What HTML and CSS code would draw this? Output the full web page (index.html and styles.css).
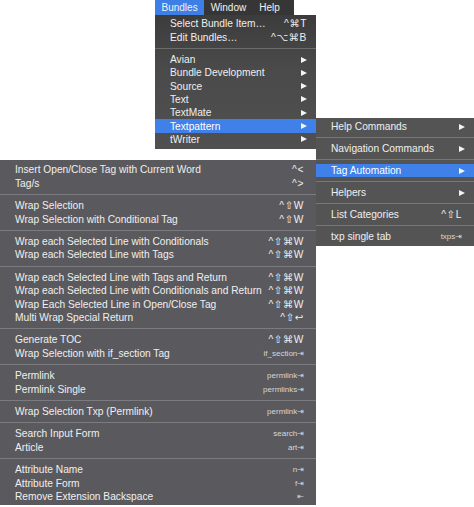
FILE: index.html
```html
<!DOCTYPE html>
<html>
<head>
<meta charset="utf-8">
<link rel="stylesheet" href="styles.css">
</head>
<body>
<div class="menubar">
  <span class="mb-item active">Bundles</span>
  <span class="mb-item">Window</span>
  <span class="mb-item">Help</span>
</div>

<div class="menu dropdown">
  <div class="row"><span>Select Bundle Item…</span><span class="key">^⌘T</span></div>
  <div class="row"><span>Edit Bundles…</span><span class="key">^⌥⌘B</span></div>
  <div class="sep"></div>
  <div class="row"><span>Avian</span><span class="arrow"></span></div>
  <div class="row"><span>Bundle Development</span><span class="arrow"></span></div>
  <div class="row"><span>Source</span><span class="arrow"></span></div>
  <div class="row"><span>Text</span><span class="arrow"></span></div>
  <div class="row"><span>TextMate</span><span class="arrow"></span></div>
  <div class="row hl"><span>Textpattern</span><span class="arrow"></span></div>
  <div class="row"><span>tWriter</span><span class="arrow"></span></div>
</div>

<div class="menu sub">
  <div class="row"><span>Help Commands</span><span class="arrow"></span></div>
  <div class="sep"></div>
  <div class="row"><span>Navigation Commands</span><span class="arrow"></span></div>
  <div class="sep"></div>
  <div class="row hl"><span>Tag Automation</span><span class="arrow"></span></div>
  <div class="sep"></div>
  <div class="row"><span>Helpers</span><span class="arrow"></span></div>
  <div class="sep"></div>
  <div class="row"><span>List Categories</span><span class="key">^⇧L</span></div>
  <div class="sep"></div>
  <div class="row"><span>txp single tab</span><span class="tab">txps⇥</span></div>
</div>

<div class="menu big">
  <div class="row"><span>Insert Open/Close Tag with Current Word</span><span class="key">^&lt;</span></div>
  <div class="row"><span>Tag/s</span><span class="key">^&gt;</span></div>
  <div class="sep"></div>
  <div class="row"><span>Wrap Selection</span><span class="key">^⇧W</span></div>
  <div class="row"><span>Wrap Selection with Conditional Tag</span><span class="key">^⇧W</span></div>
  <div class="sep"></div>
  <div class="row"><span>Wrap each Selected Line with Conditionals</span><span class="key">^⇧⌘W</span></div>
  <div class="row"><span>Wrap each Selected Line with Tags</span><span class="key">^⇧⌘W</span></div>
  <div class="sep"></div>
  <div class="row"><span>Wrap each Selected Line with Tags and Return</span><span class="key">^⇧⌘W</span></div>
  <div class="row"><span>Wrap each Selected Line with Conditionals and Return</span><span class="key">^⇧⌘W</span></div>
  <div class="row"><span>Wrap Each Selected Line in Open/Close Tag</span><span class="key">^⇧⌘W</span></div>
  <div class="row"><span>Multi Wrap Special Return</span><span class="key">^⇧↩</span></div>
  <div class="sep"></div>
  <div class="row"><span>Generate TOC</span><span class="key">^⇧⌘W</span></div>
  <div class="row"><span>Wrap Selection with if_section Tag</span><span class="tab">if_section⇥</span></div>
  <div class="sep"></div>
  <div class="row"><span>Permlink</span><span class="tab">permlink⇥</span></div>
  <div class="row"><span>Permlink Single</span><span class="tab">permlinks⇥</span></div>
  <div class="sep"></div>
  <div class="row"><span>Wrap Selection Txp (Permlink)</span><span class="tab">permlink⇥</span></div>
  <div class="sep"></div>
  <div class="row"><span>Search Input Form</span><span class="tab">search⇥</span></div>
  <div class="row"><span>Article</span><span class="tab">art⇥</span></div>
  <div class="sep"></div>
  <div class="row"><span>Attribute Name</span><span class="tab">n⇥</span></div>
  <div class="row"><span>Attribute Form</span><span class="tab">f⇥</span></div>
  <div class="row"><span>Remove Extension Backspace</span><span class="tab">⇤</span></div>
</div>
</body>
</html>
```

FILE: styles.css
```css
html, body {
  margin: 0;
  padding: 0;
}
body {
  position: relative;
  width: 474px;
  height: 507px;
  overflow: hidden;
  background: #ffffff;
  font-family: "Liberation Sans", Arial, "DejaVu Sans", sans-serif;
  font-size: 10.2px;
  color: #efefef;
}

.menubar {
  position: absolute;
  left: 155px;
  top: 0;
  width: 139px;
  height: 15px;
  background: #363636;
  display: flex;
  font-size: 10px;
}
.mb-item {
  padding: 0 6.5px;
  line-height: 15px;
  color: #f2f2f2;
}
.mb-item.active {
  background: #3d7fe7;
}

.menu {
  position: absolute;
  box-sizing: border-box;
  display: flex;
  flex-direction: column;
}

.row {
  display: flex;
  justify-content: space-between;
  align-items: center;
  flex: none;
  white-space: nowrap;
}
.row.hl {
  background: #3f80e9;
  color: #ffffff;
}

.sep {
  flex: none;
  display: flex;
  align-items: center;
}
.sep::before {
  content: "";
  flex: 1;
  height: 1px;
}

.key {
  font-family: "Liberation Sans", "DejaVu Sans", sans-serif;
  letter-spacing: 0.6px;
  color: #f0f0f0;
}
.tab {
  font-size: 8px;
  color: #d6d6d6;
  font-family: "Liberation Sans", "DejaVu Sans", sans-serif;
}

.arrow {
  width: 0;
  height: 0;
  border-left: 6px solid #f4f4f4;
  border-top: 3.5px solid transparent;
  border-bottom: 3.5px solid transparent;
}

/* Bundles dropdown */
.dropdown {
  left: 155px;
  top: 15px;
  width: 161px;
  height: 134px;
  padding-top: 2.3px;
  background: linear-gradient(#3c3c3c, #4a4a4a 40%, #505050);
}
.dropdown .row {
  height: 13.3px;
  padding: 0 9px 0 15px;
}
.dropdown .sep {
  height: 9px;
}
.dropdown .sep::before {
  background: #6c6c6c;
}

/* Textpattern submenu */
.sub {
  left: 316px;
  top: 118px;
  width: 158px;
  height: 128px;
  padding-top: 2px;
  background: #545454;
}
.sub .row {
  height: 13.3px;
  padding: 0 9px 0 15px;
}
.sub .row .key,
.sub .row .tab {
  margin-right: 3px;
}
.sub .sep {
  height: 8.7px;
}
.sub .sep::before {
  background: #787878;
}

/* Tag Automation submenu */
.big {
  left: 0;
  top: 160px;
  width: 316px;
  height: 345px;
  padding-top: 3.3px;
  background: #5a5a5e;
}
.big .row {
  height: 13.4px;
  padding: 0 12px 0 15px;
}
.big .sep {
  height: 9px;
}
.big .sep::before {
  background: #7c7c80;
}
```
